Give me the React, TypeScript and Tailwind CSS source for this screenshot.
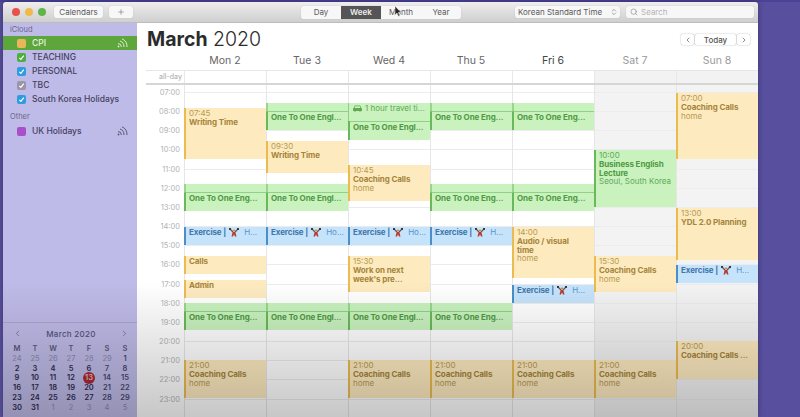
import { ChevronLeft, ChevronRight, ChevronsUpDown, Plus, Search } from 'lucide-react';

type Kind = 'yellow' | 'green' | 'blue';

interface CalEvent {
  y: number;
  end: number;
  kind: Kind;
  time?: string;
  title: string[];
  sub?: string;
  // inner line where the travel block stops and the event starts
  travelUntil?: number;
  travelText?: boolean;
  emoji?: string;
  dots?: boolean;
}

const GRID_TOP = 85;

const kindStyles: Record<Kind, { box: string; bar: string; title: string; light: string }> = {
  yellow: { box: 'bg-[#fdeabf]', bar: 'bg-[#e9bb51]', title: 'text-[#a5853a]', light: 'text-[#b89a52]' },
  green: { box: 'bg-[#c9f2bf]', bar: 'bg-[#69b95a]', title: 'text-[#4f9a42]', light: 'text-[#62a956]' },
  blue: { box: 'bg-[#c5e3fb]', bar: 'bg-[#4a8fc9]', title: 'text-[#3f76ab]', light: 'text-[#5a93c9]' },
};

const oneToOne = (y: number, label: string): CalEvent => ({
  y,
  end: y + 27,
  kind: 'green',
  title: [label],
  travelUntil: y + 9,
});
const exercise = (y: number, label: string): CalEvent => ({
  y,
  end: y + 18,
  kind: 'blue',
  title: ['Exercise |'],
  emoji: label,
});
const coaching = (y: number, end: number, time: string): CalEvent => ({
  y,
  end,
  kind: 'yellow',
  time,
  title: ['Coaching Calls'],
  sub: 'home',
});

const days: { label: string; weekend?: boolean; events: CalEvent[] }[] = [
  {
    label: 'Mon 2',
    events: [
      { y: 108, end: 159, kind: 'yellow', time: '07:45', title: ['Writing Time'] },
      oneToOne(184, 'One To One Eng...'),
      exercise(227, 'H...'),
      { y: 256, end: 274, kind: 'yellow', title: ['Calls'] },
      { y: 280, end: 298, kind: 'yellow', title: ['Admin'] },
      oneToOne(303, 'One To One Eng...'),
      coaching(360, 398, '21:00'),
    ],
  },
  {
    label: 'Tue 3',
    events: [
      oneToOne(103, 'One To One Engl...'),
      { y: 141, end: 173, kind: 'yellow', time: '09:30', title: ['Writing Time'] },
      oneToOne(184, 'One To One Engl...'),
      exercise(227, 'Ho...'),
      oneToOne(303, 'One To One Engl...'),
    ],
  },
  {
    label: 'Wed 4',
    events: [
      { y: 103, end: 121, kind: 'green', title: ['1 hour travel ti...'], travelText: true },
      { y: 121, end: 140, kind: 'green', title: ['One To One Engl...'], dots: true },
      coaching(165, 201, '10:45'),
      exercise(227, 'Ho...'),
      { y: 256, end: 292, kind: 'yellow', time: '15:30', title: ['Work on next', "week's pre..."] },
      oneToOne(303, 'One To One Engl...'),
      coaching(360, 398, '21:00'),
    ],
  },
  {
    label: 'Thu 5',
    events: [
      oneToOne(103, 'One To One Eng...'),
      oneToOne(184, 'One To One Eng...'),
      exercise(227, 'H...'),
      oneToOne(303, 'One To One Eng...'),
      coaching(360, 398, '21:00'),
    ],
  },
  {
    label: 'Fri 6',
    events: [
      oneToOne(103, 'One To One Eng...'),
      oneToOne(184, 'One To One Eng...'),
      { y: 227, end: 278, kind: 'yellow', time: '14:00', title: ['Audio / visual', 'time'], sub: 'home' },
      exercise(285, 'H...'),
      coaching(360, 398, '21:00'),
    ],
  },
  {
    label: 'Sat 7',
    weekend: true,
    events: [
      { y: 150, end: 207, kind: 'green', time: '10:00', title: ['Business English', 'Lecture'], sub: 'Seoul, South Korea' },
      coaching(256, 292, '15:30'),
      coaching(360, 398, '21:00'),
    ],
  },
  {
    label: 'Sun 8',
    weekend: true,
    events: [
      coaching(93, 159, '07:00'),
      { y: 208, end: 260, kind: 'yellow', time: '13:00', title: ['YDL 2.0 Planning'] },
      exercise(265, 'H...'),
      { y: 341, end: 379, kind: 'yellow', time: '20:00', title: ['Coaching Calls  ...'] },
    ],
  },
];

const hours = ['07:00', '08:00', '09:00', '10:00', '11:00', '12:00', '13:00', '14:00', '15:00', '16:00', '17:00', '18:00', '19:00', '20:00', '21:00', '22:00', '23:00'];

const calendars = [
  { name: 'TEACHING', color: 'bg-[#4caf3f]' },
  { name: 'PERSONAL', color: 'bg-[#2f9be0]' },
  { name: 'TBC', color: 'bg-[#9a96a8]' },
  { name: 'South Korea Holidays', color: 'bg-[#2f9be0]' },
];

const miniWeeks = [
  ['24', '25', '26', '27', '28', '29', '1'],
  ['2', '3', '4', '5', '6', '7', '8'],
  ['9', '10', '11', '12', '13', '14', '15'],
  ['16', '17', '18', '19', '20', '21', '22'],
  ['23', '24', '25', '26', '27', '28', '29'],
  ['30', '31', '1', '2', '3', '4', '5'],
];

function Broadcast({ color }: { color: string }) {
  return (
    <svg width="11" height="10" viewBox="0 0 11 10" fill="none" stroke={color} strokeWidth="1">
      <circle cx="1.5" cy="8.5" r="0.9" fill={color} stroke="none" />
      <path d="M1 5.6a3.4 3.4 0 0 1 3.4 3.4" />
      <path d="M3 3a6 6 0 0 1 4 6" />
      <path d="M5 .8a8.5 8.5 0 0 1 5 8.2" />
    </svg>
  );
}

function Check() {
  return (
    <svg width="7" height="7" viewBox="0 0 8 8" fill="none" stroke="white" strokeWidth="1.3">
      <path d="M1.5 4.5 3.3 6.2 6.6 1.8" />
    </svg>
  );
}

// the weightlifter emoji, small enough that only its shape shows
function Lifter() {
  return (
    <svg width="10" height="9" viewBox="0 0 10 9" className="shrink-0">
      <path d="M1 1 4 4M9 1 6 4" stroke="#7a4a3a" strokeWidth="1.2" />
      <rect x="0" y="0" width="2" height="2" fill="#3b3b3b" />
      <rect x="8" y="0" width="2" height="2" fill="#3b3b3b" />
      <circle cx="5" cy="2.5" r="1.1" fill="#c98a5a" />
      <path d="M3.7 4h2.6L7.5 8.6H6L5 6.3 4 8.6H2.5Z" fill="#b5392f" />
    </svg>
  );
}

function Car() {
  return (
    <svg width="9" height="7" viewBox="0 0 9 7" className="shrink-0" fill="#62a956">
      <path d="M1.8 0.5h5.4L8.3 3 9 3.6V6H7.6v.8H6.4V6H2.6v.8H1.4V6H0V3.6L.7 3Zm.5.8L1.6 3h5.8L6.7 1.3Z" />
    </svg>
  );
}

function Event({ event }: { event: CalEvent }) {
  const s = kindStyles[event.kind];
  return (
    <div
      className={`absolute -left-[1px] right-0 overflow-hidden ${s.box}`}
      style={{ top: event.y - GRID_TOP, height: event.end - event.y }}
    >
      {event.travelUntil ? (
        <>
          <div className={`absolute left-0 top-0 h-full w-[1.5px] ${s.bar} opacity-50`} />
          <div className="h-[8px]" />
          <div className="h-[1px] bg-[#8fd283]" />
          <div className={`absolute left-0 top-[9px] bottom-0 w-[2px] ${s.bar}`} />
        </>
      ) : (
        <div className={`absolute left-0 top-0 bottom-0 ${event.kind === 'green' && event.travelText ? 'w-[1px] opacity-60' : 'w-[2px]'} ${s.bar}`} />
      )}
      {event.dots && <div className="h-[1px] bg-[#8fd283]" />}
      <div className="pl-[5px] pr-[1px] pt-[1px] text-[8px] leading-[8.8px] whitespace-nowrap">
        {event.time && <div className={s.light}>{event.time}</div>}
        {event.travelText ? (
          <div className={`flex items-center gap-[3px] ${s.light}`}>
            <Car />
            <span>{event.title[0]}</span>
          </div>
        ) : event.emoji ? (
          <div className="flex items-center gap-[3px]">
            <span className={`font-bold tracking-[-0.1px] ${s.title}`}>{event.title[0]}</span>
            <Lifter />
            <span className={`ml-[2px] ${s.light}`}>{event.emoji}</span>
          </div>
        ) : (
          event.title.map((line) => (
            <div key={line} className={`font-bold tracking-[-0.1px] ${s.title}`}>
              {line}
            </div>
          ))
        )}
        {event.sub && <div className={s.light}>{event.sub}</div>}
      </div>
    </div>
  );
}

function Sidebar() {
  return (
    <aside className="w-[134px] shrink-0 flex flex-col bg-[#bfbbe8] text-[#45425f] text-[8.5px] font-medium">
      <div className="pl-[7px] h-[13px] flex items-end text-[7.5px] font-normal text-[#6a6788] pb-[1px]">iCloud</div>
      <div className="h-[14px] bg-[#5ca63b] flex items-center pl-[14px] pr-[9px] text-[#e8f3e0]">
        <span className="w-[9px] h-[9px] rounded-[2px] bg-[#e9b65a] mr-[6px]" />
        <span>CPI</span>
        <span className="ml-auto">
          <Broadcast color="#dcefd2" />
        </span>
      </div>
      <div className="flex flex-col">
        {calendars.map((c) => (
          <div key={c.name} className="h-[14px] flex items-center pl-[14px]">
            <span className={`w-[9px] h-[9px] rounded-[2px] flex items-center justify-center mr-[6px] ${c.color}`}>
              <Check />
            </span>
            <span>{c.name}</span>
          </div>
        ))}
      </div>
      <div className="pl-[7px] h-[16px] flex items-end text-[7.5px] font-normal text-[#6a6788]">Other</div>
      <div className="h-[14px] flex items-center pl-[14px] pr-[9px] mt-[2px]">
        <span className="w-[9px] h-[9px] rounded-[2px] bg-[#a94fc9] mr-[6px]" />
        <span>UK Holidays</span>
        <span className="ml-auto">
          <Broadcast color="#5b5878" />
        </span>
      </div>
      <div className="mt-auto border-t border-[#aaa6d2] h-[95px] pl-[5px] pr-[3px]">
        <div className="flex items-center justify-between h-[21px] px-[5px] text-[8px] text-[#55527a] font-medium">
          <ChevronLeft size={9} strokeWidth={1.6} />
          <span className="tracking-[0.3px]">March 2020</span>
          <ChevronRight size={9} strokeWidth={1.6} />
        </div>
        <div className="grid grid-cols-7 text-center text-[7.5px] font-semibold leading-[9.8px]">
          {['M', 'T', 'W', 'T', 'F', 'S', 'S'].map((d, i) => (
            <span key={i} className="text-[#5a5778]">
              {d}
            </span>
          ))}
          {miniWeeks.map((week, w) =>
            week.map((d, i) => {
              const inMonth = !((w === 0 && i < 6) || (w === 5 && i > 1));
              const today = d === '13';
              return (
                <span key={`${w}-${i}`} className={`relative ${inMonth ? (i > 4 ? 'text-[#4b4870]' : 'text-[#2f2d52]') : 'text-[#8a87ad] font-normal'}`}>
                  {today ? (
                    <span className="absolute left-1/2 top-1/2 -translate-x-1/2 -translate-y-1/2 w-[12px] h-[12px] rounded-full bg-[#a92a35] text-[#e9b9b9] leading-[12px]">
                      13
                    </span>
                  ) : (
                    d
                  )}
                </span>
              );
            }),
          )}
        </div>
      </div>
    </aside>
  );
}

function Toolbar() {
  const btn = 'bg-[#f7f7f7] rounded-[2px] flex items-center justify-center shadow-[0_0_1px_rgba(0,0,0,0.25)]';
  return (
    <header className="h-[21px] shrink-0 flex items-center bg-gradient-to-b from-[#efeded] to-[#d0cfcf] text-[8px] text-[#5a5a5a] border-b border-[#bdbdbd] rounded-t-[3px]">
      <div className="flex items-center gap-[5px] pl-[9px] w-[51px]">
        <span className="w-[8px] h-[8px] rounded-full bg-[#e8504c] shrink-0" />
        <span className="w-[8px] h-[8px] rounded-full bg-[#eebb4a] shrink-0" />
        <span className="w-[8px] h-[8px] rounded-full bg-[#5fb548] shrink-0" />
      </div>
      <div className={`${btn} w-[49px] h-[12px]`}>Calendars</div>
      <div className={`${btn} w-[24px] h-[12px] ml-[6px]`}>
        <Plus size={8} strokeWidth={1.5} />
      </div>
      <div className={`${btn} ml-[168px] h-[13px] w-[160px] overflow-hidden`}>
        <span className="w-[40px] text-center">Day</span>
        <span className="w-[40px] h-full flex items-center justify-center bg-[#555558] text-[#eeeeee] font-semibold">Week</span>
        <span className="w-[40px] text-center">Month</span>
        <span className="w-[40px] text-center">Year</span>
      </div>
      <div className={`${btn} ml-[54px] w-[105px] h-[12px] !justify-between pl-[3px] pr-[2px]`}>
        <span>Korean Standard Time</span>
        <ChevronsUpDown size={8} strokeWidth={1.5} />
      </div>
      <div className={`${btn} ml-[6px] w-[128px] h-[12px] !justify-start pl-[4px] gap-[3px] text-[#b5b5b5]`}>
        <Search size={8} strokeWidth={1.6} className="text-[#777777]" />
        <span>Search</span>
      </div>
    </header>
  );
}

export default function App() {
  return (
    <div className="relative w-[800px] h-[417px] overflow-hidden bg-[#58509f] font-['Inter','Liberation_Sans',sans-serif]">
      <div className="h-[2px] bg-[#4a4398]" />
      <div className="relative ml-[3px] w-[755px] h-[415px] flex flex-col shadow-[0_0_6px_rgba(0,0,0,0.35)]">
        <Toolbar />
        <div className="flex flex-1 min-h-0">
          <Sidebar />
          <main className="flex-1 min-w-0 flex flex-col bg-white">
            <div className="h-[47px] shrink-0 flex flex-col">
              <div className="flex items-start justify-between pl-[10px] pr-[8px]">
                <h1 className="text-[19.5px] leading-[24px] mt-[4px] text-[#2b2b2b]">
                  <span className="font-bold">March</span> <span className="font-light">2020</span>
                </h1>
                <div className="flex items-center gap-[1px] mt-[11px] text-[8px] font-medium text-[#555555]">
                  <span className="w-[13px] h-[11px] bg-white shadow-[0_0_1.5px_rgba(0,0,0,0.4)] rounded-[2px] flex items-center justify-center">
                    <ChevronLeft size={8} strokeWidth={2} />
                  </span>
                  <span className="w-[41px] h-[11px] bg-white shadow-[0_0_1.5px_rgba(0,0,0,0.4)] rounded-[2px] flex items-center justify-center">Today</span>
                  <span className="w-[13px] h-[11px] bg-white shadow-[0_0_1.5px_rgba(0,0,0,0.4)] rounded-[2px] flex items-center justify-center">
                    <ChevronRight size={8} strokeWidth={2} />
                  </span>
                </div>
              </div>
              <div className="flex pl-[47px] mt-auto h-[19px] pt-[1px]">
                {days.map((d) => (
                  <div key={d.label} className={`w-[82px] flex items-center justify-center text-[10.5px] ${d.weekend ? 'text-[#9a9a9a]' : d.label === 'Fri 6' ? 'text-[#444444]' : 'text-[#666666]'}`}>
                    {d.label}
                  </div>
                ))}
              </div>
            </div>
            <div className="h-[15px] shrink-0 flex border-t border-[#e6e6e6] border-b-2 border-b-[#d6d6d6] ml-[9px]">
              <div className="w-[38px] text-[7px] text-[#b5b5b5] font-medium flex items-center justify-end pr-[2px]">all-day</div>
              {days.map((d) => (
                <div key={d.label} className={`w-[82px] border-l border-[#e8e8e8] ${d.weekend ? 'bg-[#f2f2f2]' : ''}`} />
              ))}
            </div>
            <div className="flex flex-1 min-h-0 overflow-hidden">
              <div className="w-[47px] shrink-0 pt-[8px] text-[7.5px] text-[#b3b3b3]">
                {hours.map((h) => (
                  <div key={h} className="h-[19.17px] relative">
                    <span className="absolute right-[4px] -top-[5px] leading-[10px]">{h}</span>
                  </div>
                ))}
              </div>
              {days.map((d) => (
                <div key={d.label} className={`relative w-[82px] shrink-0 border-l border-[#e6e6e6] pt-[7px] ${d.weekend ? 'bg-[#f3f3f3]' : ''}`}>
                  {hours.map((h) => (
                    <div key={h} className="h-[19.17px] border-t border-[#ececec]" />
                  ))}
                  {d.events.map((e) => (
                    <Event key={`${e.y}-${e.title[0]}`} event={e} />
                  ))}
                </div>
              ))}
            </div>
          </main>
        </div>
        {/* the video's dark fade over the lower part of the window */}
        <div className="absolute left-0 right-0 bottom-0 h-[135px] pointer-events-none bg-gradient-to-b from-[rgba(0,0,0,0)] to-[rgba(0,0,0,0.22)]" />
      </div>
      {/* mouse pointer */}
      <svg width="8" height="11" viewBox="0 0 8 11" className="absolute left-[394px] top-[6px]">
        <path d="M1 0v9l2-2 1.5 3.4 1.3-.6L4.4 6.6H7Z" fill="#222222" stroke="white" strokeWidth="0.5" />
      </svg>
    </div>
  );
}
